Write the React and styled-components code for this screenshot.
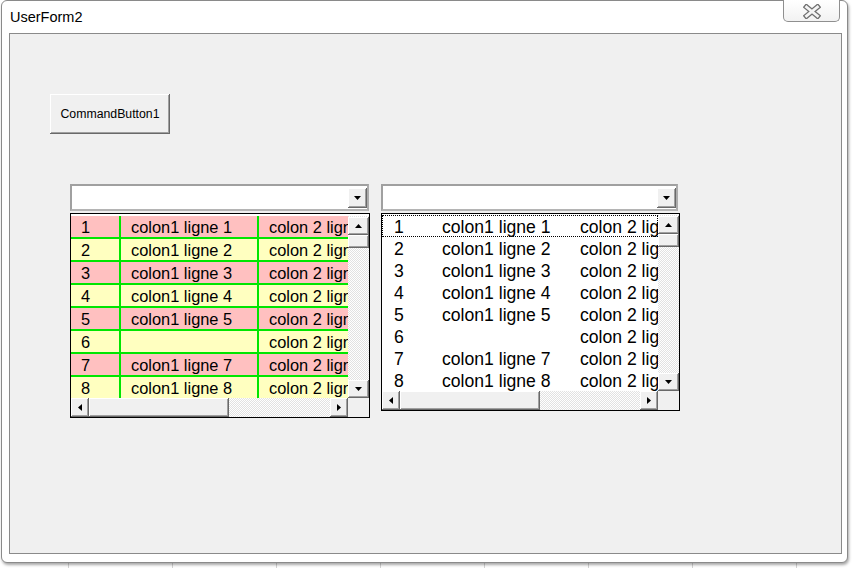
import React from 'react';
import styled, { createGlobalStyle } from 'styled-components';

const GlobalStyle = createGlobalStyle`
  html, body {
    margin: 0;
    padding: 0;
    overflow: hidden;
    background: #fff;
  }
`;

const colors = {
  face: '#f0f0f0',
  frame: '#8a8a8a',
  pink: '#ffc0c0',
  yellow: '#ffffc0',
  green: '#00e600',
  dark: '#696969',
  mid: '#a0a0a0',
};

const raised = `
  background: ${colors.face};
  box-shadow: inset -1px -1px ${colors.dark}, inset 1px 1px #fff,
    inset -2px -2px ${colors.mid}, inset 2px 2px ${colors.face};
`;

const Page = styled.div`
  width: 852px;
  height: 568px;
  box-sizing: border-box;
  padding-left: 1px;
  display: flex;
  align-items: flex-start;
  background-color: #fff;
  background-image: linear-gradient(to right, #d4d4d4 1px, transparent 1px);
  background-size: 104px 100%;
  background-position: 68px 0;
  font-family: 'Liberation Sans', Arial, sans-serif;
`;

const Window = styled.div`
  width: 847px;
  height: 563px;
  box-sizing: border-box;
  display: flex;
  flex-direction: column;
  padding: 0 5px 8px 7px;
  background: #fff;
  border: 1px solid ${colors.frame};
  border-radius: 6px;
  box-shadow: 1px 2px 3px rgba(0, 0, 0, 0.35);
`;

const TitleBar = styled.div`
  height: 32px;
  flex-shrink: 0;
  display: flex;
  align-items: center;
  justify-content: space-between;
  padding-left: 1px;
`;

const Title = styled.span`
  font-size: 14.5px;
  color: #000;
`;

const CloseButton = styled.div`
  align-self: flex-start;
  margin: -1px 2px 0 0;
  width: 57px;
  height: 22px;
  box-sizing: border-box;
  display: flex;
  align-items: center;
  justify-content: center;
  padding-top: 1px;
  border: 1px solid #8f8f8f;
  border-top: none;
  border-radius: 0 0 5px 5px;
  background: linear-gradient(#ffffff, #f2f2f2);
`;

const Client = styled.div`
  flex: 1;
  display: flex;
  flex-direction: column;
  align-items: flex-start;
  padding: 60px 0 0 40px;
  background: ${colors.face};
  border: 1px solid ${colors.frame};
`;

const CommandButton = styled.div`
  width: 120px;
  height: 40px;
  box-sizing: border-box;
  display: flex;
  align-items: center;
  justify-content: center;
  font-size: 12.3px;
  color: #000;
  ${raised}
`;

const Controls = styled.div`
  display: flex;
  align-items: flex-start;
  gap: 11px;
  margin: 50px 0 0 20px;
`;

const Group = styled.div`
  display: flex;
  flex-direction: column;
  gap: 2px;
`;

const Combo = styled.div`
  width: ${(p) => p.$width}px;
  height: 27px;
  box-sizing: border-box;
  display: flex;
  justify-content: flex-end;
  align-items: center;
  background: #fff;
  border: 2px solid #a0a0a0;
  border-right-color: #acacac;
  border-bottom-color: #b4b4b4;
`;

const DropButton = styled.div`
  width: 19px;
  height: 20px;
  display: flex;
  align-items: center;
  justify-content: center;
  ${raised}
`;

const ListFrame = styled.div`
  width: ${(p) => p.$width}px;
  height: ${(p) => p.$height}px;
  box-sizing: border-box;
  display: grid;
  grid-template-columns: 1fr 21px;
  grid-template-rows: 1fr 19px;
  padding-top: ${(p) => p.$padTop}px;
  background: #fff;
  border: 1px solid #000;
  overflow: hidden;
`;

const ListBody = styled.div`
  display: flex;
  flex-direction: column;
  gap: ${(p) => (p.$colored ? 2 : 0)}px;
  background: ${(p) => (p.$colored ? colors.green : '#fff')};
  overflow: hidden;
  min-width: 0;
`;

const Row = styled.div`
  display: grid;
  grid-template-columns: ${(p) => (p.$colored ? '48px 136px 1fr' : '48px 138px 1fr')};
  gap: ${(p) => (p.$colored ? 2 : 0)}px;
  height: ${(p) => (p.$colored ? 21 : 22)}px;
  flex-shrink: 0;
  outline: ${(p) => (p.$focused ? '1px dotted #000' : 'none')};
  outline-offset: -1px;
`;

const Cell = styled.div`
  min-width: 0;
  overflow: hidden;
  white-space: nowrap;
  padding-left: ${(p) => (p.$colored ? 10 : 12)}px;
  padding-top: 1px;
  font-size: ${(p) => (p.$colored ? 16.4 : 17.6)}px;
  line-height: ${(p) => (p.$colored ? 21 : 22)}px;
  color: #000;
  background: ${(p) => p.$bg || 'transparent'};
`;

const track = `
  background-color: #f4f4f4;
  background-image: repeating-conic-gradient(#ffffff 0 25%, #e2e2e2 0 50%);
  background-size: 2px 2px;
`;

const VScroll = styled.div`
  display: flex;
  flex-direction: column;
  padding-top: 1px;
  ${track}
`;

const HScroll = styled.div`
  display: flex;
  ${track}
`;

const ScrollButton = styled.div`
  flex-shrink: 0;
  width: ${(p) => (p.$horizontal ? '18px' : 'auto')};
  height: ${(p) => (p.$horizontal ? 'auto' : '18px')};
  display: flex;
  align-items: center;
  justify-content: center;
  ${raised}
`;

const Thumb = styled.div`
  flex-shrink: 0;
  width: ${(p) => (p.$horizontal ? '140px' : 'auto')};
  height: ${(p) => (p.$horizontal ? 'auto' : '13px')};
  ${raised}
`;

const Spacer = styled.div`
  flex: 1;
`;

const Corner = styled.div`
  background: ${colors.face};
`;

const arrowShapes = {
  up: { w: 7, h: 4, pts: '0,4 3.5,0 7,4' },
  down: { w: 7, h: 4, pts: '0,0 7,0 3.5,4' },
  left: { w: 4, h: 7, pts: '4,0 4,7 0,3.5' },
  right: { w: 4, h: 7, pts: '0,0 0,7 4,3.5' },
};

const Arrow = ({ dir }) => {
  const s = arrowShapes[dir];
  return (
    <svg width={s.w} height={s.h} viewBox={`0 0 ${s.w} ${s.h}`}>
      <polygon points={s.pts} fill="#000" />
    </svg>
  );
};

const CloseIcon = () => (
  <svg width="18" height="15" viewBox="0 0 18 15">
    <path d="M3.5 3 L14.5 12 M14.5 3 L3.5 12" stroke="#6f6f6f" strokeWidth="5.4" strokeLinecap="square" fill="none" />
    <path d="M3.5 3 L14.5 12 M14.5 3 L3.5 12" stroke="#f4f4f4" strokeWidth="2.8" strokeLinecap="square" fill="none" />
  </svg>
);

const rows = Array.from({ length: 8 }, (_, i) => ({
  num: String(i + 1),
  first: i === 5 ? '' : `colon1 ligne ${i + 1}`,
  second: `colon 2 ligne ${i + 1}`,
}));

const ListBox = ({ colored, width, height, padTop }) => (
  <ListFrame $width={width} $height={height} $padTop={padTop}>
    <ListBody $colored={colored}>
      {rows.map((r, i) => {
        const bg = colored ? (i % 2 === 0 ? colors.pink : colors.yellow) : null;
        return (
          <Row key={r.num} $colored={colored} $focused={!colored && i === 0}>
            <Cell $colored={colored} $bg={bg}>{r.num}</Cell>
            <Cell $colored={colored} $bg={bg}>{r.first}</Cell>
            <Cell $colored={colored} $bg={bg}>{r.second}</Cell>
          </Row>
        );
      })}
    </ListBody>
    <VScroll>
      <ScrollButton><Arrow dir="up" /></ScrollButton>
      <Thumb />
      <Spacer />
      <ScrollButton><Arrow dir="down" /></ScrollButton>
    </VScroll>
    <HScroll>
      <ScrollButton $horizontal><Arrow dir="left" /></ScrollButton>
      <Thumb $horizontal />
      <Spacer />
      <ScrollButton $horizontal><Arrow dir="right" /></ScrollButton>
    </HScroll>
    <Corner />
  </ListFrame>
);

const ComboBox = ({ width }) => (
  <Combo $width={width}>
    <DropButton><Arrow dir="down" /></DropButton>
  </Combo>
);

const App = () => (
  <Page>
    <GlobalStyle />
    <Window>
      <TitleBar>
        <Title>UserForm2</Title>
        <CloseButton><CloseIcon /></CloseButton>
      </TitleBar>
      <Client>
        <CommandButton>CommandButton1</CommandButton>
        <Controls>
          <Group>
            <ComboBox width={299} />
            <ListBox colored width={300} height={205} padTop={2} />
          </Group>
          <Group>
            <ComboBox width={297} />
            <ListBox width={299} height={198} padTop={1} />
          </Group>
        </Controls>
      </Client>
    </Window>
  </Page>
);

export default App;
